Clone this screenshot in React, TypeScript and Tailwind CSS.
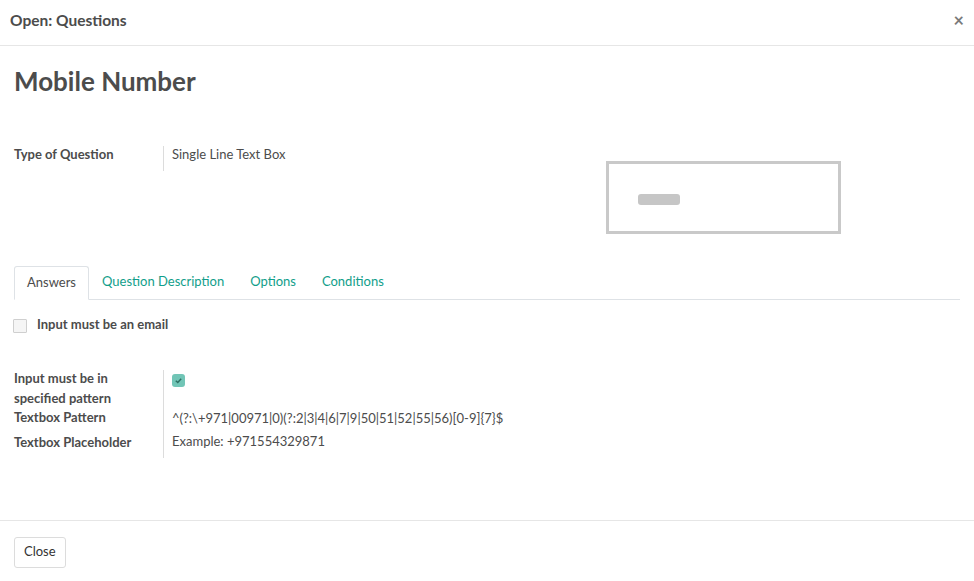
import React from "react";

export default function App() {
  return (
    <div className="w-[974px] h-[581px] bg-white flex flex-col text-[#4c4c4c] overflow-hidden" style={{ fontFamily: "Lato, 'Noto Sans', sans-serif" }}>
      {/* header */}
      <div className="h-[46px] border-b border-[#e6e6e6] flex items-center justify-between pl-[10px] pr-[10px] shrink-0">
        <div className="text-[15.5px] font-bold text-[#4c4c4c] pb-[3px]">Open: Questions</div>
        <div className="text-[18px] leading-none text-[#7a7a7a] font-bold pb-[6px]">×</div>
      </div>

      {/* body */}
      <div className="flex-1 px-[14px] pt-[20px]">
        <h1 className="text-[26px] font-bold leading-[30px] text-[#4c4c4c]">Mobile Number</h1>

        <div className="flex mt-[50px] h-[120px]">
          <div className="flex items-start">
            <div className="w-[149px] text-[13px] font-bold leading-[20px] -mt-[2px]">Type of Question</div>
            <div className="border-l border-[#dcdcdc] h-[25px] pl-[8px] text-[13px] leading-[20px]"><div className="-mt-[2px]">Single Line Text Box</div></div>
          </div>
          <div className="ml-[321px] mt-[15px] w-[235px] h-[73px] border-[3px] border-[#c9c9c9] flex items-center pl-[29px] pt-[4px]">
            <div className="w-[42px] h-[11px] rounded-[3px] bg-[#c6c6c6]" />
          </div>
        </div>

        {/* tabs */}
        <div className="flex items-end border-b border-[#dee2e6] w-[946px] h-[34px] text-[13px]">
          <div className="h-[34px] -mb-px px-[12px] pb-[1px] border border-[#dee2e6] border-b-white rounded-t-[3px] bg-white flex items-center text-[#4c4c4c]">Answers</div>
          <div className="h-[34px] px-[13px] flex items-center text-[#119e8a]">Question Description</div>
          <div className="h-[34px] px-[13px] flex items-center text-[#119e8a]">Options</div>
          <div className="h-[34px] px-[13px] flex items-center text-[#119e8a]">Conditions</div>
        </div>

        <div className="flex items-center mt-[15px] -ml-[1px]">
          <div className="w-[14px] h-[14px] border border-[#cfcfcf] bg-[#f5f5f5] rounded-[1px] mt-[3px]" />
          <div className="ml-[10px] text-[13px] font-bold">Input must be an email</div>
        </div>

        <div className="flex mt-[35px]">
          <div className="w-[149px] text-[13px] font-bold leading-[20px] -mt-[2px]">
            <div className="h-[40px]">Input must be in<br />specified pattern</div>
            <div className="h-[24px] leading-[18px]">Textbox Pattern</div>
            <div className="leading-[20px]">Textbox Placeholder</div>
          </div>
          <div className="border-l border-[#dcdcdc] h-[88px] pl-[8px] text-[13px]">
            <div className="h-[37px] pt-[4px]">
              <div className="w-[13px] h-[13px] rounded-[3px] bg-[#71c5b6] flex items-center justify-center">
                <svg width="9" height="9" viewBox="0 0 10 10"><path d="M2 5.2 L4.2 7.2 L8 3" fill="none" stroke="#2d6f63" strokeWidth="1.6" /></svg>
              </div>
            </div>
            <div className="h-[24px] leading-[20px] pt-[1px]">^(?:\+971|00971|0)(?:2|3|4|6|7|9|50|51|52|55|56)[0-9]&#123;7&#125;$</div>
            <div className="leading-[20px]">Example: +971554329871</div>
          </div>
        </div>
      </div>

      {/* footer */}
      <div className="h-[61px] border-t border-[#e6e6e6] shrink-0 px-[14px] pt-[16px]">
        <button className="h-[31px] px-[9px] pb-[1px] border border-[#dcdcdc] rounded-[3px] text-[13px] text-[#333] bg-white">Close</button>
      </div>
    </div>
  );
}
